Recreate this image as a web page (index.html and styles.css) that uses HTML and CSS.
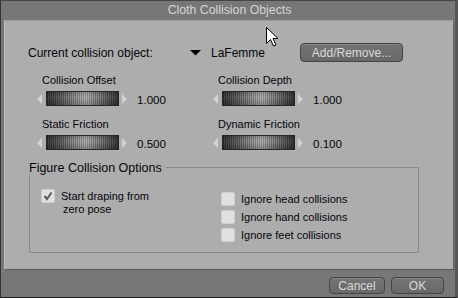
FILE: index.html
```html
<!DOCTYPE html>
<html>
<head>
<meta charset="utf-8">
<link rel="stylesheet" href="styles.css">
</head>
<body>
<div class="window">
  <div class="titlebar">Cloth Collision Objects</div>
  <div class="panel">
    <div class="toprow">
      <span class="cur-label">Current collision object:</span>
      <svg class="drop" width="11" height="6" viewBox="0 0 11 6"><polygon points="0,0 11,0 5.5,5.5" fill="#000"/></svg>
      <span class="cur-name">LaFemme</span>
      <button class="btn btn-add">Add/Remove...</button>
    </div>
    <div class="sliders">
      <div class="slider">
        <div class="s-label">Collision Offset</div>
        <div class="s-row">
          <svg class="arr" width="5" height="10" viewBox="0 0 5 10"><polygon points="5,0 5,10 0,5" fill="#d2d2d2"/></svg>
          <div class="bar"></div>
          <svg class="arr arr-r" width="5" height="10" viewBox="0 0 5 10"><polygon points="0,0 0,10 5,5" fill="#d2d2d2"/></svg>
          <span class="val">1.000</span>
        </div>
      </div>
      <div class="slider">
        <div class="s-label">Collision Depth</div>
        <div class="s-row">
          <svg class="arr" width="5" height="10" viewBox="0 0 5 10"><polygon points="5,0 5,10 0,5" fill="#d2d2d2"/></svg>
          <div class="bar"></div>
          <svg class="arr arr-r" width="5" height="10" viewBox="0 0 5 10"><polygon points="0,0 0,10 5,5" fill="#d2d2d2"/></svg>
          <span class="val">1.000</span>
        </div>
      </div>
      <div class="slider">
        <div class="s-label">Static Friction</div>
        <div class="s-row">
          <svg class="arr" width="5" height="10" viewBox="0 0 5 10"><polygon points="5,0 5,10 0,5" fill="#d2d2d2"/></svg>
          <div class="bar"></div>
          <svg class="arr arr-r" width="5" height="10" viewBox="0 0 5 10"><polygon points="0,0 0,10 5,5" fill="#d2d2d2"/></svg>
          <span class="val">0.500</span>
        </div>
      </div>
      <div class="slider">
        <div class="s-label">Dynamic Friction</div>
        <div class="s-row">
          <svg class="arr" width="5" height="10" viewBox="0 0 5 10"><polygon points="5,0 5,10 0,5" fill="#d2d2d2"/></svg>
          <div class="bar"></div>
          <svg class="arr arr-r" width="5" height="10" viewBox="0 0 5 10"><polygon points="0,0 0,10 5,5" fill="#d2d2d2"/></svg>
          <span class="val">0.100</span>
        </div>
      </div>
    </div>
    <div class="group">
      <div class="group-head">
        <span class="group-title">Figure Collision Options</span>
        <span class="group-rule"></span>
      </div>
      <div class="group-body">
        <div class="col-left">
          <div class="check-item">
            <span class="box">
              <svg width="14" height="14" viewBox="0 0 14 14"><polyline points="3.5,7 6,10 10.5,3.5" fill="none" stroke="#5a5a5a" stroke-width="2"/></svg>
            </span>
            <span class="check-text">Start draping from<span class="line2">zero pose</span></span>
          </div>
        </div>
        <div class="col-right">
          <div class="check-row"><span class="box"></span><span class="check-label">Ignore head collisions</span></div>
          <div class="check-row"><span class="box"></span><span class="check-label">Ignore hand collisions</span></div>
          <div class="check-row"><span class="box"></span><span class="check-label">Ignore feet collisions</span></div>
        </div>
      </div>
    </div>
  </div>
  <div class="footer">
    <button class="btn btn-cancel">Cancel</button>
    <button class="btn btn-ok">OK</button>
  </div>
  <svg class="cursor" width="13" height="20" viewBox="0 0 13 20"><polygon points="0.5,0.5 0.5,16.5 4.5,12.5 7.5,19 10,18 7,11.5 12,11.5" fill="#fff" stroke="#000" stroke-width="1"/></svg>
</div>
</body>
</html>
```
FILE: styles.css
```css
html, body {
  margin: 0;
  padding: 0;
}
body {
  width: 458px;
  height: 298px;
  overflow: hidden;
  font-family: "Liberation Sans", Arial, sans-serif;
}
.window {
  position: relative;
  box-sizing: border-box;
  width: 458px;
  height: 298px;
  background: #777777;
  border-left: 1px solid #333333;
  border-top: 1px solid #454545;
  border-right: 3px solid #555555;
  border-bottom: 1px solid #1e1e1e;
  display: flex;
  flex-direction: column;
}
.titlebar {
  height: 19px;
  line-height: 19px;
  text-align: center;
  color: #d4d4d4;
  font-size: 12.3px;
  padding-left: 3px;
}
.panel {
  box-sizing: border-box;
  height: 250px;
  margin-left: 3px;
  margin-right: 1px;
  background: #adadad;
  border-top: 1px solid #9c9c9c;
  border-left: 1px solid #bdbdbd;
  border-right: 1px solid #5e5e5e;
  border-bottom: 1px solid #5a5a5a;
  color: #05050c;
}
.toprow {
  display: flex;
  align-items: center;
  height: 19px;
  margin-top: 22px;
  margin-left: 23px;
  font-size: 12px;
  line-height: 14px;
}
.cur-label {
  width: 162px;
}
.drop {
  display: block;
  margin-right: 10px;
  margin-top: 1px;
}
.cur-name {
  width: 89px;
}
.btn {
  box-sizing: border-box;
  font-family: "Liberation Sans", Arial, sans-serif;
  font-size: 12px;
  color: #dadada;
  background: linear-gradient(#747474, #686868);
  border: 1px solid #444444;
  border-radius: 4px;
  box-shadow: inset 0 1px 0 #868686;
  padding: 0;
  margin: 0;
  line-height: 14px;
}
.btn-add {
  width: 103px;
  height: 19px;
}
.sliders {
  display: grid;
  grid-template-columns: 176px 176px;
  row-gap: 12px;
  margin-top: 12px;
  margin-left: 32px;
}
.s-label {
  font-size: 11px;
  line-height: 13px;
  padding-left: 5px;
}
.s-row {
  display: flex;
  align-items: center;
  height: 15px;
  margin-top: 4px;
}
.arr {
  display: block;
  flex: none;
}
.bar {
  box-sizing: border-box;
  width: 73px;
  height: 15px;
  margin-left: 4px;
  margin-right: 3px;
  border: 1px solid #262626;
  background:
    repeating-linear-gradient(90deg, rgba(0,0,0,0.22) 0 1px, rgba(255,255,255,0.06) 1px 2px),
    linear-gradient(180deg, rgba(0,0,0,0.15), rgba(255,255,255,0.05) 40%, rgba(0,0,0,0.2)),
    linear-gradient(90deg, #2c2c2c 0%, #555555 18%, #8a8a8a 38%, #b0b0b0 55%, #7e7e7e 72%, #4e4e4e 88%, #2c2c2c 100%);
}
.arr-r {
  margin-right: 10px;
}
.val {
  font-size: 11.6px;
  line-height: 13px;
  padding-top: 1px;
}
.group {
  width: 390px;
  margin-top: 11px;
  margin-left: 24px;
}
.group-head {
  display: flex;
  height: 14px;
}
.group-title {
  font-size: 12.5px;
  line-height: 14px;
}
.group-rule {
  flex: 1;
  margin-left: 4px;
  margin-top: 6px;
  border-top: 1px solid #8a8a8a;
  border-right: 1px solid #8a8a8a;
}
.group-body {
  box-sizing: border-box;
  height: 78px;
  display: flex;
  border-left: 1px solid #8a8a8a;
  border-right: 1px solid #8a8a8a;
  border-bottom: 1px solid #8a8a8a;
  padding-top: 14px;
  padding-left: 11px;
  font-size: 11px;
  line-height: 13px;
}
.col-left {
  width: 180px;
}
.check-item {
  display: flex;
  align-items: flex-start;
}
.box {
  box-sizing: border-box;
  display: block;
  flex: none;
  width: 14px;
  height: 14px;
  background: #e0e0e0;
  border: 1px solid #d0d0d0;
  border-radius: 2px;
}
.box svg {
  display: block;
  margin: -1px;
}
.check-text {
  margin-left: 6px;
  margin-top: 1px;
}
.line2 {
  display: block;
  padding-left: 2px;
}
.col-right {
  display: flex;
  flex-direction: column;
  gap: 4px;
  padding-top: 3px;
}
.check-row {
  display: flex;
  align-items: center;
  height: 14px;
}
.check-label {
  margin-left: 6px;
}
.footer {
  flex: 1;
  display: flex;
  justify-content: flex-end;
  align-items: flex-start;
  gap: 6px;
  padding-top: 7px;
  padding-right: 11px;
}
.btn-cancel {
  width: 56px;
  height: 17px;
}
.btn-ok {
  width: 53px;
  height: 17px;
}
.cursor {
  position: absolute;
  left: 265px;
  top: 26px;
}
```
